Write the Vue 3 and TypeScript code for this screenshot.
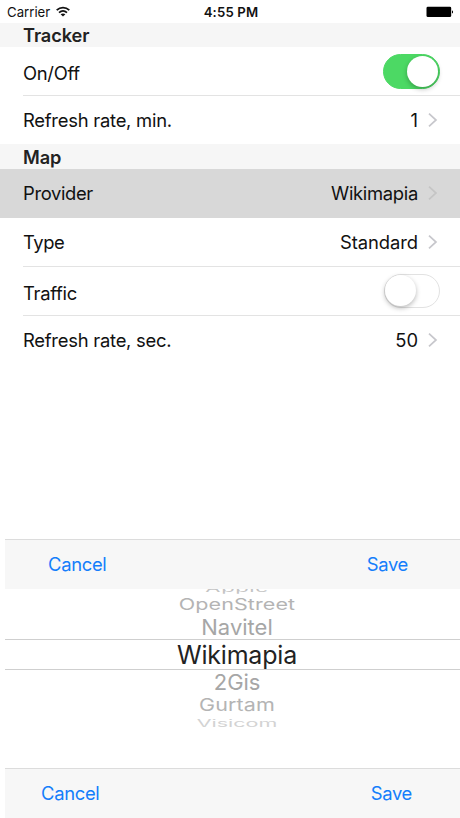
<script setup lang="ts">
import { ref } from 'vue'

interface Row {
  label: string
  fit: number
  value?: string
  valueFit?: number
  toggle?: boolean
  on?: boolean
  selected?: boolean
  divider?: boolean
}
interface Section {
  title: string
  rows: Row[]
}
interface Option {
  name: string
  size: number
  squash: number
  spacing: number
  height: number
  color: string
}

const sections = ref<Section[]>([
  {
    title: 'Tracker',
    rows: [
      { label: 'On/Off', fit: -0.3, toggle: true, on: true, divider: true },
      { label: 'Refresh rate, min.', fit: -0.24, value: '1' },
    ],
  },
  {
    title: 'Map',
    rows: [
      { label: 'Provider', fit: -0.36, value: 'Wikimapia', valueFit: -0.3, selected: true },
      { label: 'Type', fit: -0.45, value: 'Standard', valueFit: -0.08 },
      { label: 'Traffic', fit: -0.3, toggle: true, on: false, divider: true },
      { label: 'Refresh rate, sec.', fit: -0.24, value: '50', valueFit: 0 },
    ],
  },
])
sections.value[1].rows[1].divider = true

const options: Option[] = [
  { name: 'Apple', size: 22, squash: 0.42, spacing: 0.6, height: 8, color: '#c4c4c4' },
  { name: 'OpenStreet', size: 21.5, squash: 0.75, spacing: 0.1, height: 22, color: '#b4b4b4' },
  { name: 'Navitel', size: 22, squash: 0.98, spacing: 0, height: 24, color: '#a6a6a6' },
  { name: 'Wikimapia', size: 25, squash: 1.03, spacing: -0.2, height: 31, color: '#222222' },
  { name: '2Gis', size: 22, squash: 0.98, spacing: -0.1, height: 23, color: '#a6a6a6' },
  { name: 'Gurtam', size: 21.5, squash: 0.8, spacing: 0.1, height: 24, color: '#b4b4b4' },
  { name: 'Visicom', size: 21.5, squash: 0.48, spacing: 0, height: 12, color: '#d3d3d3' },
]
</script>

<template>
  <div class="screen">
    <header class="status">
      <div class="carrier">
        <span>Carrier</span>
        <svg class="wifi" width="14" height="11" viewBox="0 0 14 11" fill="none" stroke="#111">
          <path d="M0.7 4.1C4.4 0.7 9.6 0.7 13.3 4.1" stroke-width="1.8" />
          <path d="M3 6.7C5.4 4.5 8.6 4.5 11 6.7" stroke-width="1.7" />
          <path d="M7 10.6L4.6 8.3C6 7.1 8 7.1 9.4 8.3Z" fill="#111" stroke="none" />
        </svg>
      </div>
      <span class="clock">4:55 PM</span>
      <svg class="battery" width="28" height="12" viewBox="0 0 28 12">
        <rect x="0.5" y="0.7" width="24.7" height="10.4" rx="1.4" fill="#000" />
        <path d="M26 4.2C27.4 4.7 27.4 7.1 26 7.6Z" fill="#000" />
      </svg>
    </header>

    <main class="settings">
      <section v-for="s in sections" :key="s.title">
        <h2 :class="{ low: s.title === 'Map' }">{{ s.title }}</h2>
        <div
          v-for="r in s.rows"
          :key="r.label"
          class="row"
          :class="{ selected: r.selected, divider: r.divider, 'with-switch': r.toggle }"
        >
          <span class="label" :style="{ letterSpacing: r.fit + 'px' }">{{ r.label }}</span>
          <button
            v-if="r.toggle"
            class="switch"
            :class="{ on: r.on }"
            role="switch"
            :aria-checked="r.on"
            @click="r.on = !r.on"
          >
            <i class="knob"></i>
          </button>
          <template v-else>
            <span class="value" :style="{ letterSpacing: (r.valueFit ?? 0) + 'px' }">{{ r.value }}</span>
            <svg class="chevron" width="10" height="16" viewBox="0 0 10 16" fill="none">
              <path d="M1 1.6L8 8L1 14.4" stroke-width="1.7" />
            </svg>
          </template>
        </div>
      </section>
    </main>

    <nav class="toolbar upper">
      <button>Cancel</button>
      <button>Save</button>
    </nav>
    <div class="picker">
      <div
        v-for="(o, i) in options"
        :key="o.name"
        class="option"
        :class="{ current: i === 3 }"
        :style="{ height: o.height + 'px', color: o.color }"
      >
        <span
          :style="{
            fontSize: o.size + 'px',
            letterSpacing: o.spacing + 'px',
            transform: `scaleY(${o.squash})`,
          }"
        >{{ o.name }}</span>
      </div>
    </div>
    <nav class="toolbar lower">
      <button>Cancel</button>
      <button>Save</button>
    </nav>
  </div>
</template>

<style>
body {
  background: #fff;
  overflow: hidden;
}
</style>

<style scoped>
.screen {
  box-sizing: border-box;
  width: 460px;
  height: 818px;
  display: flex;
  flex-direction: column;
  background: #fff;
  color: #111;
  font-family: Inter, 'Liberation Sans', sans-serif;
  font-size: 18.4px;
  overflow: hidden;
}
.status {
  height: 23px;
  flex: none;
  display: grid;
  grid-template-columns: 1fr auto 1fr;
  align-items: center;
  padding: 1px 6px 0 8px;
  box-sizing: border-box;
  font-size: 13.2px;
}
.carrier {
  display: flex;
  align-items: center;
  gap: 6px;
  margin-left: -1px;
  letter-spacing: 0;
}
.wifi {
  margin-top: -2px;
}
.clock {
  font-weight: 600;
  letter-spacing: 0.15px;
}
.battery {
  justify-self: end;
}
.settings {
  height: 516px;
  flex: none;
}
h2 {
  box-sizing: border-box;
  height: 24px;
  margin: 0;
  padding-left: 23px;
  background: #f6f6f6;
  color: #222;
  font-size: 18.2px;
  font-weight: 600;
  line-height: 25px;
  letter-spacing: -0.1px;
}
h2.low {
  height: 25px;
  line-height: 27px;
}
.row {
  box-sizing: border-box;
  height: 49px;
  margin-left: 23px;
  padding-right: 21px;
  display: flex;
  align-items: center;
  border-bottom: 1px solid transparent;
}
.row.divider {
  border-color: #e3e3e3;
}
.row:last-child {
  height: 48px;
}
.row.selected {
  margin-left: 0;
  padding-left: 23px;
  background: #d8d8d8;
  border-bottom: 1px solid #d8d8d8;
}
.label {
  flex: 1;
}
.with-switch .label {
  padding-top: 3px;
}
.value {
  margin-right: 10px;
}
.row {
  padding-right: 22px;
}
.with-switch {
  padding-right: 20px;
}
.chevron {
  stroke: #c7c7cc;
}
.selected .chevron {
  stroke: #c5c5c5;
}
.switch {
  box-sizing: border-box;
  width: 57px;
  height: 35px;
  padding: 1px;
  border: 1px solid #4cd964;
  border-radius: 18px;
  background: #4cd964;
  display: flex;
  justify-content: flex-end;
}
.switch:not(.on) {
  width: 56px;
  height: 34px;
  padding: 0;
  border: 1.5px solid #e2e2e2;
  background: #fff;
  justify-content: flex-start;
}
.knob {
  width: 31px;
  height: 31px;
  border-radius: 50%;
  background: #fff;
  box-shadow: 0 2px 5px rgba(0, 0, 0, 0.28);
}
.toolbar {
  box-sizing: border-box;
  height: 50px;
  flex: none;
  margin-left: 5px;
  display: flex;
  justify-content: space-between;
  align-items: center;
  background: #f7f7f7;
  border-top: 1px solid #dcdcdc;
}
.toolbar.upper {
  padding: 0 52px 2px 43px;
}
.toolbar.lower {
  padding: 0 48px 2px 36px;
}
.toolbar button {
  padding: 0;
  border: 0;
  background: none;
  color: #147efb;
  font: inherit;
  letter-spacing: -0.3px;
}
.picker {
  height: 179px;
  flex: none;
  display: flex;
  flex-direction: column;
  overflow: hidden;
}
.option {
  flex: none;
  box-sizing: border-box;
  display: flex;
  align-items: center;
  justify-content: center;
  padding-left: 14px;
}
.option:first-child {
  margin-top: -4px;
}
.option.current {
  margin: 0 0 0 5px;
  padding-left: 9px;
  border-top: 1px solid #cfcfcf;
  border-bottom: 1px solid #cfcfcf;
}
</style>
